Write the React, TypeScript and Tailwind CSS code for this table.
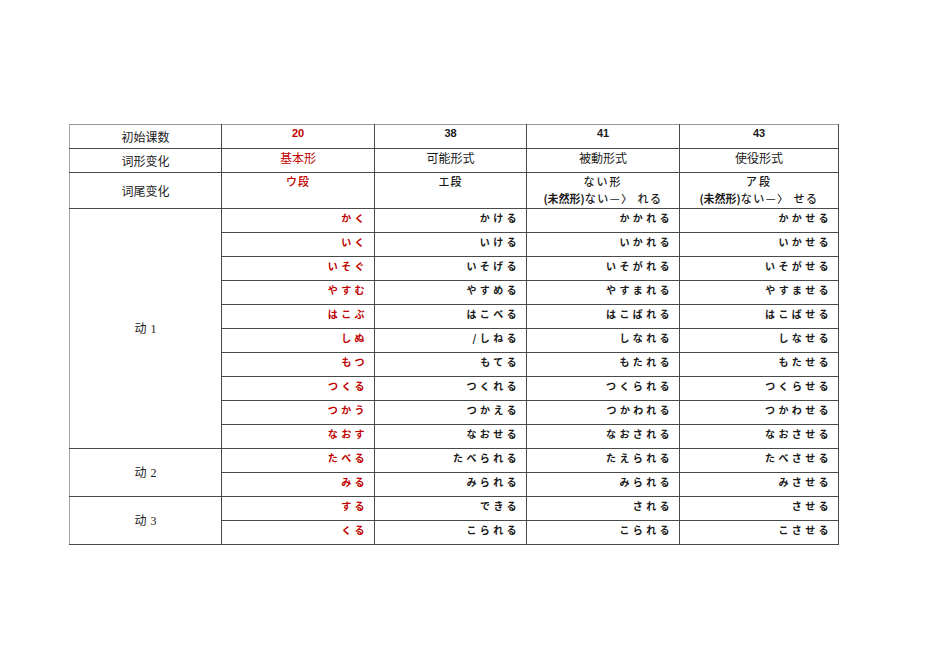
const cjk = '"Noto Sans CJK SC", "Noto Sans CJK JP", sans-serif';
const jp = '"Noto Sans CJK JP", "Noto Sans CJK SC", sans-serif';
const num = '"Liberation Sans", Arial, sans-serif';

const dong1 = [
  ['かく', 'かける', 'かかれる', 'かかせる'],
  ['いく', 'いける', 'いかれる', 'いかせる'],
  ['いそぐ', 'いそげる', 'いそがれる', 'いそがせる'],
  ['やすむ', 'やすめる', 'やすまれる', 'やすませる'],
  ['はこぶ', 'はこべる', 'はこばれる', 'はこばせる'],
  ['しぬ', '/しねる', 'しなれる', 'しなせる'],
  ['もつ', 'もてる', 'もたれる', 'もたせる'],
  ['つくる', 'つくれる', 'つくられる', 'つくらせる'],
  ['つかう', 'つかえる', 'つかわれる', 'つかわせる'],
  ['なおす', 'なおせる', 'なおされる', 'なおさせる'],
];
const dong2 = [
  ['たべる', 'たべられる', 'たえられる', 'たべさせる'],
  ['みる', 'みられる', 'みられる', 'みさせる'],
];
const dong3 = [
  ['する', 'できる', 'される', 'させる'],
  ['くる', 'こられる', 'こられる', 'こさせる'],
];

const groups = [
  { label: '动', num: '1', rows: dong1 },
  { label: '动', num: '2', rows: dong2 },
  { label: '动', num: '3', rows: dong3 },
];

const cell = 'border border-[#4a4a4a] p-0';

function KanaCell({ text, red, light }: { text: string; red?: boolean; light?: boolean }) {
  return (
    <td className={`${cell} ${light ? 'border-l-[#8c8c8c]' : ''} h-[24px] align-top`}>
      <div
        className={`text-right pr-[6px] pt-[1px] text-[10px] leading-[16px] font-semibold tracking-[3.4px] ${red ? 'text-[#c00000]' : 'text-[#1a1a1a]'}`}
        style={{ fontFamily: jp }}
      >
        {text}
      </div>
    </td>
  );
}

export default function App() {
  return (
    <div className="w-[950px] h-[672px] bg-white overflow-hidden pt-[124px] pl-[69px]">
      <table className="border-collapse table-fixed w-[769px]">
        <colgroup>
          <col className="w-[152px]" />
          <col className="w-[153px]" />
          <col className="w-[152px]" />
          <col className="w-[153px]" />
          <col className="w-[159px]" />
        </colgroup>
        <tbody>
          <tr className="h-[24px]">
            <td className={`${cell} border-l-[#a6a6a6] border-t-[#9a9a9a] align-middle text-center text-[12px] text-[#1a1a1a]`} style={{ fontFamily: cjk }}>
              初始课数
            </td>
            <td className={`${cell} border-t-[#9a9a9a] align-top text-center text-[11px] leading-[16px] font-bold text-[#c00000]`} style={{ fontFamily: num }}>
              20
            </td>
            <td className={`${cell} border-t-[#9a9a9a] border-l-[#8c8c8c] align-top text-center text-[11px] leading-[16px] font-bold text-[#1a1a1a]`} style={{ fontFamily: num }}>
              38
            </td>
            <td className={`${cell} border-t-[#9a9a9a] align-top text-center text-[11px] leading-[16px] font-bold text-[#1a1a1a]`} style={{ fontFamily: num }}>
              41
            </td>
            <td className={`${cell} border-t-[#9a9a9a] align-top text-center text-[11px] leading-[16px] font-bold text-[#1a1a1a]`} style={{ fontFamily: num }}>
              43
            </td>
          </tr>
          <tr className="h-[24px]">
            <td className={`${cell} border-l-[#a6a6a6] align-middle text-center text-[12px] text-[#1a1a1a]`} style={{ fontFamily: cjk }}>
              词形变化
            </td>
            <td className={`${cell} align-top text-center text-[12px] leading-[18px] text-[#c00000]`} style={{ fontFamily: jp }}>
              基本形
            </td>
            <td className={`${cell} border-l-[#8c8c8c] align-top text-center text-[12px] leading-[18px] text-[#1a1a1a]`} style={{ fontFamily: jp }}>
              可能形式
            </td>
            <td className={`${cell} align-top text-center text-[12px] leading-[18px] text-[#1a1a1a]`} style={{ fontFamily: jp }}>
              被動形式
            </td>
            <td className={`${cell} align-top text-center text-[12px] leading-[18px] text-[#1a1a1a]`} style={{ fontFamily: jp }}>
              使役形式
            </td>
          </tr>
          <tr className="h-[36px]">
            <td className={`${cell} border-l-[#a6a6a6] align-middle text-center text-[12px] text-[#1a1a1a]`} style={{ fontFamily: cjk }}>
              词尾变化
            </td>
            <td className={`${cell} align-top text-center text-[11px] leading-[17px] font-medium tracking-[1px] text-[#c00000]`} style={{ fontFamily: jp }}>
              ウ段
            </td>
            <td className={`${cell} border-l-[#8c8c8c] align-top text-center text-[11px] leading-[17px] font-medium tracking-[1px] text-[#1a1a1a]`} style={{ fontFamily: jp }}>
              エ段
            </td>
            <td className={`${cell} align-top text-center text-[11px] leading-[17px] font-medium text-[#1a1a1a]`} style={{ fontFamily: jp }}>
              <div className="tracking-[2px]">ない形</div>
              <div>
                <span className="font-bold">(未然形)</span>
                <span className="tracking-[1.5px]">ない—〉 れる</span>
              </div>
            </td>
            <td className={`${cell} align-top text-center text-[11px] leading-[17px] font-medium text-[#1a1a1a]`} style={{ fontFamily: jp }}>
              <div className="tracking-[2px]">ア段</div>
              <div>
                <span className="font-bold">(未然形)</span>
                <span className="tracking-[1.5px]">ない—〉 せる</span>
              </div>
            </td>
          </tr>
          {groups.map((g) =>
            g.rows.map((r, i) => (
              <tr key={g.num + i} className="h-[24px]">
                {i === 0 && (
                  <td
                    rowSpan={g.rows.length}
                    className={`${cell} border-l-[#a6a6a6] align-middle text-center text-[12px] text-[#1a1a1a]`}
                    style={{ fontFamily: cjk }}
                  >
                    {g.label}
                    <span className="ml-[4px]" style={{ fontFamily: '"Liberation Serif", serif' }}>
                      {g.num}
                    </span>
                  </td>
                )}
                <KanaCell text={r[0]} red />
                <KanaCell text={r[1]} light />
                <KanaCell text={r[2]} />
                <KanaCell text={r[3]} />
              </tr>
            ))
          )}
        </tbody>
      </table>
    </div>
  );
}
